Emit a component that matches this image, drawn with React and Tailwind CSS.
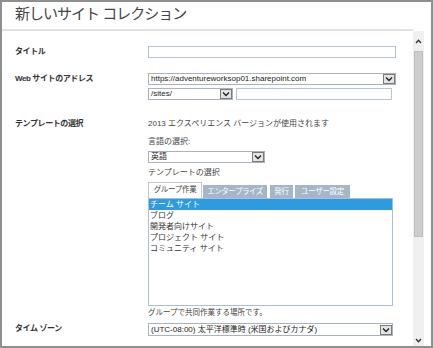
import React from "react";

const Chevron = ({ className = "" }) => (
  <svg width="8" height="6" viewBox="0 0 8 6" className={className}>
    <polyline points="1,1.5 4,4.5 7,1.5" fill="none" stroke="#222" strokeWidth="1.4" />
  </svg>
);

const Select = ({ text, className = "" }) => (
  <div className={`h-[12px] border border-[#a9b3bf] bg-white flex items-center ${className}`}>
    <div className="flex-1 pl-[2px] text-[8px] leading-[10px] text-[#222] whitespace-nowrap overflow-hidden">{text}</div>
    <div className="w-[12px] h-[10px] bg-[#e4e4e4] border border-[#7a7a7a] flex items-center justify-center">
      <Chevron />
    </div>
  </div>
);

const Label = ({ children }) => (
  <div className="w-[133px] shrink-0 text-[8px] leading-[12px] font-bold text-[#333] tracking-[-0.4px] whitespace-nowrap">
    {children}
  </div>
);

export default function App() {
  const items = ["チーム サイト", "ブログ", "開発者向けサイト", "プロジェクト サイト", "コミュニティ サイト"];
  return (
    <div className="w-[433px] h-[348px] border-2 border-[#8f8f8f] bg-white flex overflow-hidden font-['Liberation_Sans','Noto_Sans_CJK_JP',sans-serif] text-[#444]">
      <div className="w-[411px] flex flex-col shrink-0">
        <div className="h-[27px] pl-[13px] pt-[2px] text-[15px] leading-[20px] text-[#444] tracking-[-1px] whitespace-nowrap">
          新しいサイト コレクション
        </div>
        <div className="h-[2px] bg-[#e1e1e1]" />
        <div className="pl-[13px] flex flex-col">
          {/* Title */}
          <div className="flex mt-[15px]">
            <Label>タイトル</Label>
            <div className="w-[248px] h-[12px] border border-[#b7c5d3] bg-white" />
          </div>
          {/* Web address */}
          <div className="flex mt-[15px]">
            <Label>Web サイトのアドレス</Label>
            <div className="flex flex-col">
              <Select text="https://adventureworksop01.sharepoint.com" className="w-[248px]" />
              <div className="flex mt-[3px]">
                <Select text="/sites/" className="w-[85px]" />
                <div className="ml-[3px] w-[156px] h-[12px] border border-[#b7c5d3] bg-white" />
              </div>
            </div>
          </div>
          {/* Template */}
          <div className="flex mt-[19px]">
            <div className="w-[133px] shrink-0 text-[8px] leading-[10px] font-bold text-[#333] tracking-[-0.4px] whitespace-nowrap">
              テンプレートの選択
            </div>
            <div className="flex flex-col">
              <div className="text-[8px] leading-[10px] text-[#444] whitespace-nowrap">2013 エクスペリエンス バージョンが使用されます</div>
              <div className="mt-[8px] text-[8px] leading-[10px] text-[#444]">言語の選択:</div>
              <Select text="英語" className="w-[117px] mt-[4px]" />
              <div className="mt-[5px] text-[8px] leading-[10px] text-[#444]">テンプレートの選択</div>
              <div className="mt-[4px] h-[16px] flex items-end gap-[1px]">
                <div className="w-[54px] h-[16px] border border-b-0 border-[#c6c6c6] bg-white text-[7.5px] leading-[14px] tracking-[-0.3px] text-[#444] flex justify-center whitespace-nowrap">
                  グループ作業
                </div>
                <div className="w-[64px] h-[13px] bg-[#a4b6c8] text-white text-[7.5px] leading-[13px] tracking-[-0.5px] flex justify-center whitespace-nowrap overflow-hidden">
                  エンタープライズ
                </div>
                <div className="ml-[2px] w-[23px] h-[13px] bg-[#a4b6c8] text-white text-[7.5px] leading-[13px] tracking-[-0.3px] flex justify-center whitespace-nowrap">
                  発行
                </div>
                <div className="ml-[1px] w-[55px] h-[13px] bg-[#a4b6c8] text-white text-[7.5px] leading-[13px] tracking-[-0.3px] flex justify-center whitespace-nowrap">
                  ユーザー設定
                </div>
              </div>
              <div className="w-[245px] h-[108px] border border-[#a9c1d8] bg-white flex flex-col">
                {items.map((it, i) => (
                  <div
                    key={it}
                    className={`h-[11px] pl-[1px] text-[8px] leading-[11px] whitespace-nowrap ${
                      i === 0 ? "bg-[#2d9be0] text-white" : "text-[#333]"
                    }`}
                  >
                    {it}
                  </div>
                ))}
              </div>
              <div className="mt-[2px] text-[7.5px] leading-[10px] text-[#444] whitespace-nowrap">グループで共同作業する場所です。</div>
            </div>
          </div>
          {/* Time zone */}
          <div className="flex mt-[5px]">
            <div className="w-[133px] shrink-0 text-[8px] leading-[12px] font-bold text-[#333] tracking-[-0.4px] whitespace-nowrap">
              タイム ゾーン
            </div>
            <Select text="(UTC-08:00) 太平洋標準時 (米国およびカナダ)" className="w-[245px] h-[13px]" />
          </div>
        </div>
      </div>
      {/* Scrollbar column */}
      <div className="flex-1 pt-[29px] flex">
        <div className="w-[11px] h-full bg-[#f0f0f0] flex flex-col items-center">
          <div className="h-[20px] w-full flex items-center justify-center">
            <svg width="7" height="5" viewBox="0 0 7 5">
              <polyline points="1,4 3.5,1.2 6,4" fill="none" stroke="#333" strokeWidth="1.3" />
            </svg>
          </div>
          <div className="w-[9px] h-[186px] bg-[#cdcdcd] border border-[#bdbdbd]" />
          <div className="flex-1" />
          <div className="h-[12px] w-full flex items-center justify-center">
            <svg width="7" height="5" viewBox="0 0 7 5">
              <polyline points="1,1 3.5,3.8 6,1" fill="none" stroke="#333" strokeWidth="1.3" />
            </svg>
          </div>
        </div>
      </div>
    </div>
  );
}
